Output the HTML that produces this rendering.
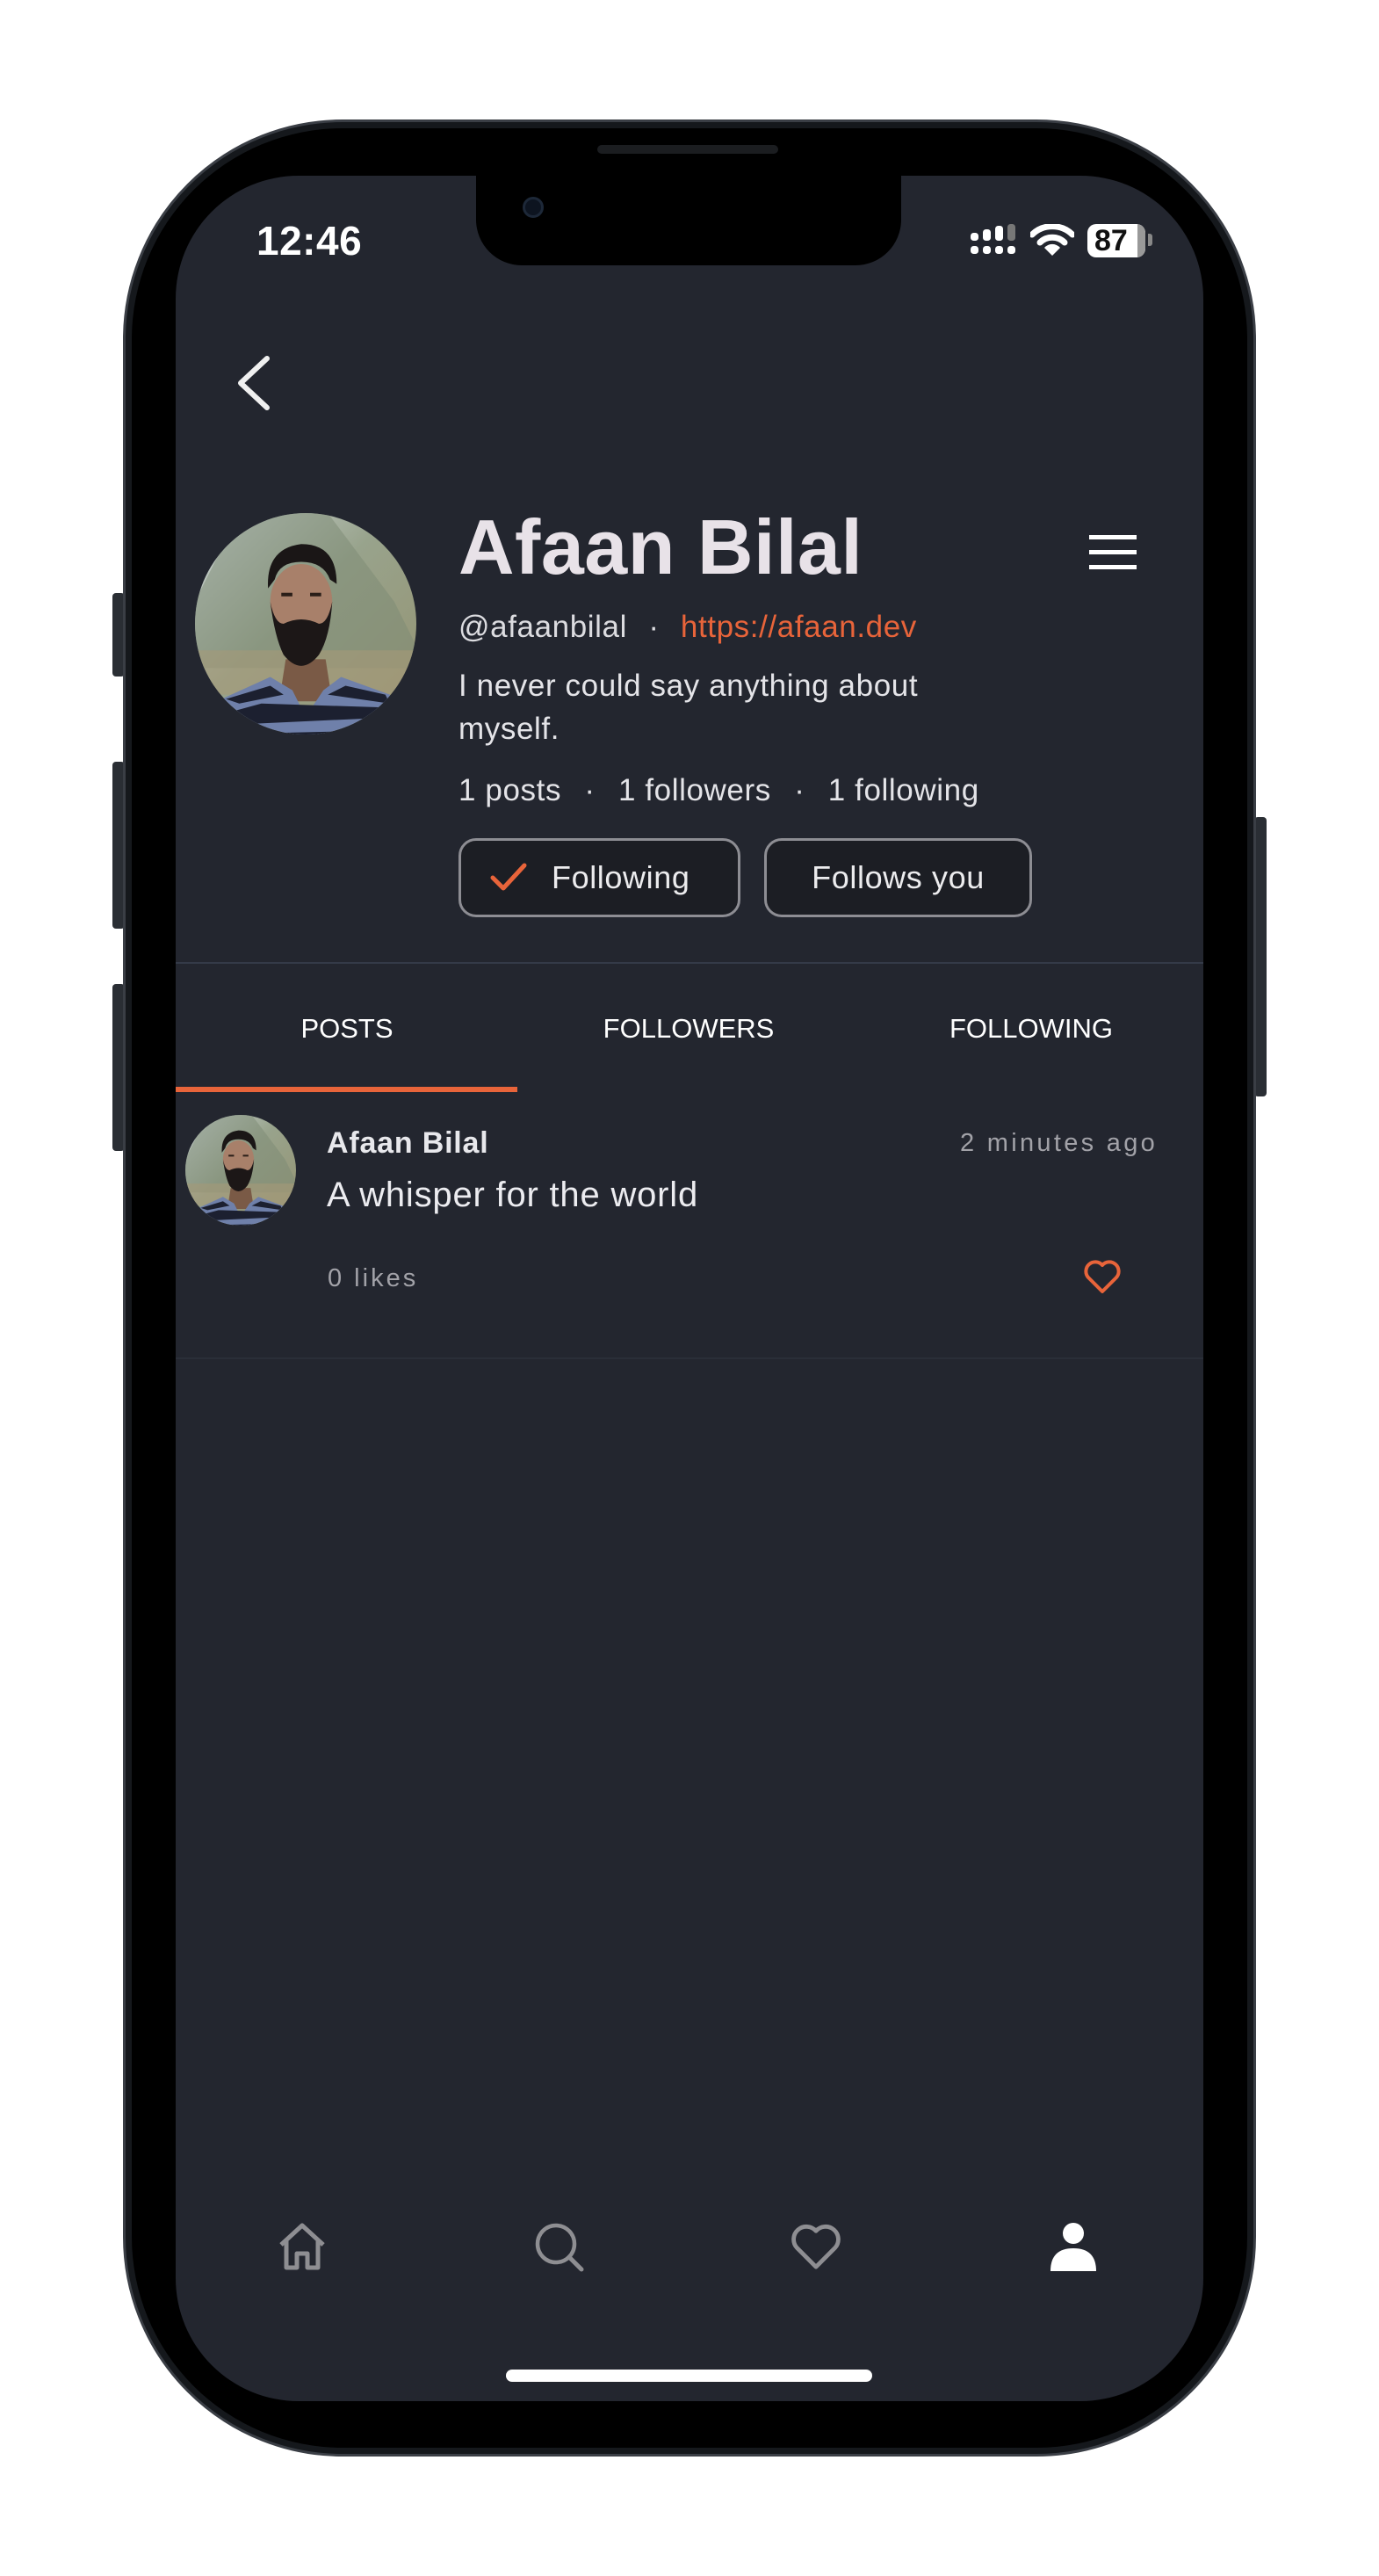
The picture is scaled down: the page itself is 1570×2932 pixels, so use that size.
<!DOCTYPE html>
<html><head><meta charset="utf-8">
<style>
*{margin:0;padding:0;box-sizing:border-box}
html,body{width:1570px;height:2932px;background:#fff;overflow:hidden;font-family:"Liberation Sans",sans-serif}
.a{position:absolute;white-space:nowrap}
#frame{position:absolute;left:140px;top:136px;width:1290px;height:2660px;border-radius:250px;background:#15181c;border:3px solid #3a3e45}
#bezel{position:absolute;left:150px;top:146px;width:1270px;height:2640px;border-radius:240px;background:#000}
#screen{position:absolute;left:200px;top:200px;width:1170px;height:2533px;border-radius:140px;background:#23262f;overflow:hidden}
.btn{position:absolute;top:954px;height:90px;border:3px solid #8d8d93;border-radius:20px;background:#1c1e24;color:#ececee;font-size:36px;line-height:84px;letter-spacing:0.6px}
.tab{position:absolute;top:1152px;font-size:31px;color:#fff;line-height:38px;text-align:center;width:390px}
</style></head><body>
<div class="a" style="left:128px;top:675px;width:14px;height:95px;background:#2a2e34;border-radius:4px"></div>
<div class="a" style="left:128px;top:867px;width:14px;height:190px;background:#2a2e34;border-radius:4px"></div>
<div class="a" style="left:128px;top:1120px;width:14px;height:190px;background:#2a2e34;border-radius:4px"></div>
<div class="a" style="left:1428px;top:930px;width:14px;height:318px;background:#2a2e34;border-radius:4px"></div>
<div id="frame"></div>
<div id="bezel"></div>
<div id="screen"></div>
<div class="a" style="left:542px;top:190px;width:484px;height:112px;background:#000;border-radius:0 0 52px 52px"></div>
<div class="a" style="left:680px;top:165px;width:206px;height:10px;background:#1b1d20;border-radius:5px"></div>
<div class="a" style="left:595px;top:224px;width:24px;height:24px;background:#0d1420;border-radius:50%;border:3px solid #1d2838"></div>
<div class="a" style="left:292px;top:248px;font-size:46px;line-height:52px;color:#fff;font-weight:bold;letter-spacing:0.5px">12:46</div>
<svg class="a" style="left:1105px;top:255px" width="54" height="40" viewBox="0 0 54 40">
<g fill="#fff"><rect x="0" y="10" width="9" height="9" rx="3.5"/><rect x="14" y="6" width="9" height="13" rx="3.5"/><rect x="28" y="2" width="9" height="17" rx="3.5"/><rect x="42" y="0" width="9" height="19" rx="3.5" fill="#777"/>
<rect x="0" y="25" width="9" height="9" rx="3.5"/><rect x="14" y="25" width="9" height="9" rx="3.5"/><rect x="28" y="25" width="9" height="9" rx="3.5"/><rect x="42" y="25" width="9" height="9" rx="3.5"/></g></svg>
<svg class="a" style="left:1173px;top:255px" width="50" height="38" viewBox="0 0 50 38">
<path d="M2 12 A33 33 0 0 1 48 12" stroke="#fff" stroke-width="7" fill="none" stroke-linecap="round"/>
<path d="M11 21 A20 20 0 0 1 39 21" stroke="#fff" stroke-width="7" fill="none" stroke-linecap="round"/>
<path d="M25 36 L16 27 A12 12 0 0 1 34 27 Z" fill="#fff"/></svg>
<div class="a" style="left:1238px;top:255px;width:66px;height:38px;background:#fff;border-radius:10px;overflow:hidden"><div style="position:absolute;right:0;top:0;width:9px;height:38px;background:#999"></div><div style="position:absolute;left:8px;top:0;font-size:34px;line-height:38px;font-weight:bold;color:#111">87</div></div>
<div class="a" style="left:1307px;top:266px;width:5px;height:14px;background:#888;border-radius:0 3px 3px 0"></div>
<svg class="a" style="left:262px;top:400px" width="52" height="72" viewBox="0 0 52 72"><path d="M42 8 L12 36 L42 64" stroke="#f0f0f0" stroke-width="6" fill="none" stroke-linecap="round" stroke-linejoin="round"/></svg>
<svg width="0" height="0" style="position:absolute"><defs>
<clipPath id="cc"><circle cx="50" cy="50" r="50"/></clipPath>
<linearGradient id="bg" x1="0" y1="0" x2="1" y2="1"><stop offset="0" stop-color="#cfd8da"/><stop offset="0.45" stop-color="#98a38c"/><stop offset="1" stop-color="#959270"/></linearGradient>
<symbol id="av" viewBox="0 0 100 100"><g clip-path="url(#cc)">
<rect width="100" height="100" fill="url(#bg)"/>
<path d="M20 0 L60 0 L90 40 L100 60 L100 70 L0 70 L0 40Z" fill="#7c8a74" opacity="0.5"/>
<rect x="0" y="62" width="100" height="20" fill="#a59a78" opacity="0.6"/>
<path d="M41 66 L59 66 L62 85 L38 85Z" fill="#7a5a46"/>
<path d="M6 100 L12 84 L34 74 L44 80 L50 92 L58 80 L66 74 L88 82 L96 100Z" fill="#6f80aa"/>
<g fill="#1c2030"><path d="M8 92 L30 86 L92 88 L94 92 L8 96Z"/><path d="M6 100 L92 98 L96 100Z"/><path d="M14 84 L34 78 L40 82 L20 86Z"/><path d="M60 82 L68 78 L86 82 L88 86Z"/></g>
<ellipse cx="48" cy="40" rx="14" ry="17" fill="#a8806a"/>
<path d="M33 34 Q32 16 48 14 Q64 14 64 32 L61 30 Q58 22 48 22 Q38 22 36 30Z" fill="#1a1616"/>
<path d="M34 40 Q36 56 40 64 Q48 74 56 64 Q61 56 62 40 Q60 50 56 50 Q48 46 40 50 Q36 50 34 40Z" fill="#1c1717"/>
<rect x="39" y="36" width="5" height="1.6" fill="#2a1e18"/><rect x="52" y="36" width="5" height="1.6" fill="#2a1e18"/>
</g></symbol></defs></svg>
<svg class="a" style="left:222px;top:584px" width="252" height="252"><use href="#av"/></svg>
<div class="a" style="left:522px;top:575px;font-size:88px;line-height:96px;font-weight:bold;color:#e8e2e8;letter-spacing:0.5px">Afaan Bilal</div>
<div class="a" style="left:1240px;top:609px;width:54px;height:5px;background:#fff"></div>
<div class="a" style="left:1240px;top:626px;width:54px;height:5px;background:#fff"></div>
<div class="a" style="left:1240px;top:643px;width:54px;height:5px;background:#fff"></div>
<div class="a" style="left:522px;top:693px;font-size:35px;line-height:42px;color:#dcdce0;letter-spacing:0.6px">@afaanbilal <span style="margin:0 14px">·</span> <span style="color:#e8643a">https://afaan.dev</span></div>
<div class="a" style="left:522px;top:756px;font-size:35px;line-height:49px;color:#e4e4e8;letter-spacing:0.6px">I never could say anything about<br>myself.</div>
<div class="a" style="left:522px;top:879px;font-size:35px;line-height:42px;color:#e4e4e8;letter-spacing:0.6px">1 posts <span style="margin:0 16px">·</span> 1 followers <span style="margin:0 16px">·</span> 1 following</div>
<div class="btn" style="left:522px;width:321px"><svg style="position:absolute;left:32px;top:24px" width="44" height="36" viewBox="0 0 44 36"><path d="M4 18 L16 30 L40 4" stroke="#e8643a" stroke-width="5" fill="none" stroke-linecap="round" stroke-linejoin="round"/></svg><span style="position:absolute;left:103px">Following</span></div>
<div class="btn" style="left:870px;width:305px;text-align:center">Follows you</div>
<div class="a" style="left:200px;top:1095px;width:1170px;height:2px;background:#343a48"></div>
<div class="tab" style="left:200px">POSTS</div>
<div class="tab" style="left:589px">FOLLOWERS</div>
<div class="tab" style="left:979px">FOLLOWING</div>
<div class="a" style="left:200px;top:1237px;width:389px;height:6px;background:#e8643a"></div>
<svg class="a" style="left:211px;top:1269px" width="126" height="126"><use href="#av"/></svg>
<div class="a" style="left:372px;top:1281px;font-size:34px;line-height:40px;font-weight:bold;color:#e8e8ec;letter-spacing:0.8px">Afaan Bilal</div>
<div class="a" style="left:1093px;top:1283px;font-size:29px;line-height:36px;color:#a2a2a8;letter-spacing:3.3px">2 minutes ago</div>
<div class="a" style="left:372px;top:1338px;font-size:40px;line-height:44px;color:#ececf0;letter-spacing:0.8px">A whisper for the world</div>
<div class="a" style="left:373px;top:1437px;font-size:29px;line-height:36px;color:#a2a2a8;letter-spacing:3px">0 likes</div>
<svg class="a" style="left:1233px;top:1432px" width="44" height="42" viewBox="0 0 44 42"><path d="M22 38 L6 22 A9.5 9.5 0 0 1 22 8 A9.5 9.5 0 0 1 38 22 Z" stroke="#e8643a" stroke-width="4" fill="none" stroke-linejoin="round"/></svg>
<div class="a" style="left:200px;top:1545px;width:1170px;height:2px;background:#2a2e38"></div>
<svg class="a" style="left:314px;top:2527px" width="60" height="60" viewBox="0 0 60 60"><path d="M6 28 L30 6 L54 28 M12 24 V54 H24 V38 H36 V54 H48 V24" stroke="#8e8e92" stroke-width="5" fill="none" stroke-linejoin="round"/></svg>
<svg class="a" style="left:606px;top:2527px" width="62" height="62" viewBox="0 0 62 62"><circle cx="27" cy="27" r="21" stroke="#8e8e92" stroke-width="4.5" fill="none"/><path d="M42 42 L56 56" stroke="#8e8e92" stroke-width="5" stroke-linecap="round"/></svg>
<svg class="a" style="left:899px;top:2527px" width="60" height="60" viewBox="0 0 44 42"><path d="M22 38 L6 22 A9.5 9.5 0 0 1 22 8 A9.5 9.5 0 0 1 38 22 Z" stroke="#8e8e92" stroke-width="3.5" fill="none" stroke-linejoin="round"/></svg>
<svg class="a" style="left:1192px;top:2527px" width="60" height="60" viewBox="0 0 60 60"><circle cx="30" cy="15" r="12" fill="#fff"/><path d="M4 58 Q4 32 30 32 Q56 32 56 58Z" fill="#fff"/></svg>
<div class="a" style="left:576px;top:2697px;width:417px;height:14px;background:#fff;border-radius:7px"></div>
</body></html>
